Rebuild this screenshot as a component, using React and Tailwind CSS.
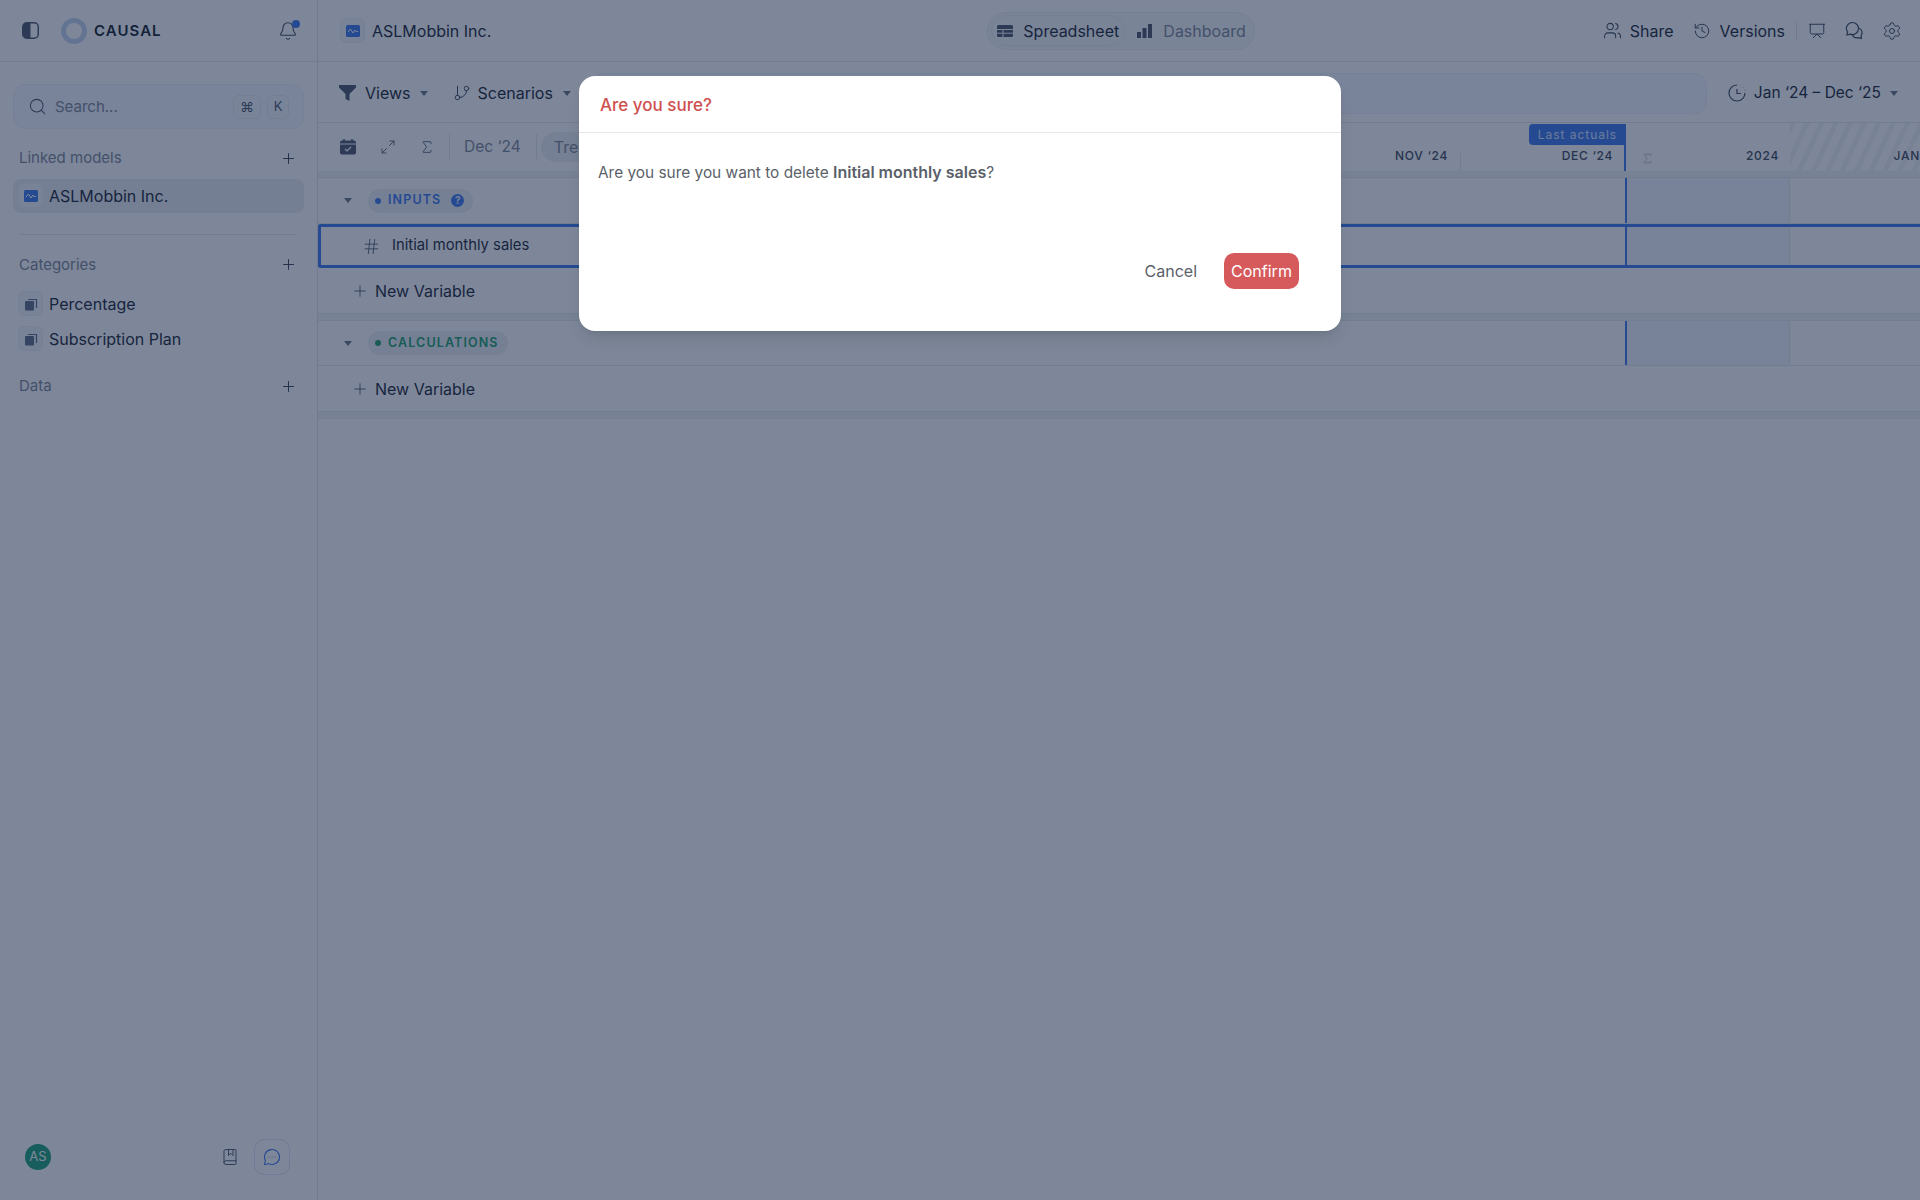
import React from 'react';
import {
  Bell, Search, Plus, GitBranch, Maximize2, Sigma, Hash, Users, History, Presentation, Settings, BookMarked, MessageCircleMore,
} from 'lucide-react';

const Caret = ({ className = '' }) => (
  <svg width="8" height="5" viewBox="0 0 8 5" className={`shrink-0 ${className}`}>
    <path d="M0 0h8L4 5z" fill="currentColor" />
  </svg>
);

// small blue square with the pulse line
const ModelIcon = () => (
  <div className="w-[25px] h-[25px] shrink-0 rounded-md bg-[#f3f5fb] border border-[#eef0f6] flex items-center justify-center">
    <svg width="14" height="12" viewBox="0 0 14 12">
      <rect width="14" height="12" rx="1.5" fill="#3f78f0" />
      <path d="M2 7l2.5-3L7 8l2-3 1 1.5h2" stroke="#fff" strokeWidth="1" fill="none" />
    </svg>
  </div>
);

const CopyIcon = () => (
  <div className="w-[25px] h-[25px] shrink-0 rounded-md bg-[#f3f5fb] border border-[#eef0f6] flex items-center justify-center">
    <svg width="14" height="14" viewBox="0 0 14 14" fill="none">
      <path d="M4 2.5h8.5V11" stroke="#5f6b86" strokeWidth="1.2" />
      <rect x="1" y="4" width="9" height="9.5" rx="1" fill="#5f6b86" />
    </svg>
  </div>
);

const SideLabel = ({ children }) => (
  <div className="flex items-center justify-between pl-[19px] pr-[20px] text-[15px] text-[#7f8696]">
    <span>{children}</span>
    <Plus size={17} strokeWidth={1.4} className="text-[#3b4252]" />
  </div>
);

const Sidebar = () => (
  <aside className="w-[318px] shrink-0 h-full border-r border-[#e3e5ea] flex flex-col">
    <div className="h-[62px] shrink-0 border-b border-[#e6e8ec] flex items-center pl-[22px] pr-[19px]">
      <svg width="17" height="17" viewBox="0 0 17 17">
        <rect x="0.75" y="0.75" width="15.5" height="15.5" rx="4" fill="none" stroke="#4d566b" strokeWidth="1.5" />
        <path d="M4.5 1H8.5V16H4.5A3.5 3.5 0 0 1 1 12.5V4.5A3.5 3.5 0 0 1 4.5 1Z" fill="#4d566b" />
      </svg>
      <div className="ml-[22px] w-[26px] h-[26px] rounded-full border-[5px] border-[#c5d6f2]" />
      <span className="ml-[7px] mt-[2px] text-[15px] font-semibold tracking-[0.07em] text-[#141c2c]">CAUSAL</span>
      <div className="relative ml-auto">
        <Bell size={20} strokeWidth={1.3} className="text-[#3f475a]" />
        <div className="absolute -top-[1px] -right-[2px] w-[8px] h-[8px] rounded-full bg-[#3f78f0]" />
      </div>
    </div>

    <div className="mx-[13px] mt-[22px] h-[45px] rounded-xl border border-[#eef1f8] bg-[#f5f6ff] flex items-center pl-[14px] pr-[14px]">
      <Search size={19} strokeWidth={1.3} className="text-[#4d566b]" />
      <span className="ml-[8px] mt-[1px] text-[15px] text-[#7f8696]">Search...</span>
      <div className="ml-auto flex gap-[6px]">
        <span className="w-[28px] h-[24px] rounded-md border border-[#e8eaf4] bg-[#f8f9ff] flex items-center justify-center text-[14px] text-[#4d566b]">⌘</span>
        <span className="w-[22px] h-[24px] rounded-md border border-[#e8eaf4] bg-[#f8f9ff] flex items-center justify-center text-[13px] text-[#4d566b]">K</span>
      </div>
    </div>

    <div className="mt-[18px]"><SideLabel>Linked models</SideLabel></div>
    <div className="mx-[13px] mt-[9px] h-[34px] rounded-lg bg-[#eceef2] flex items-center pl-[5px] gap-[6px] text-[16px] text-[#1d2536]">
      <ModelIcon />
      <span>ASLMobbin Inc.</span>
    </div>
    <div className="mx-[20px] mt-[21px] h-px bg-[#e6e8ec]" />
    <div className="mt-[19px]"><SideLabel>Categories</SideLabel></div>
    <div className="mt-[15px] flex flex-col gap-[10px] pl-[18px]">
      {['Percentage', 'Subscription Plan'].map((c) => (
        <div key={c} className="flex items-center gap-[6px] text-[16px] text-[#1d2536]">
          <CopyIcon />
          <span>{c}</span>
        </div>
      ))}
    </div>
    <div className="mt-[24px]"><SideLabel>Data</SideLabel></div>

    <div className="mt-auto mb-[25px] flex items-center pl-[25px] pr-[27px]">
      <div className="w-[26px] h-[26px] rounded-full bg-[#1fa37a] text-white text-[13px] flex items-center justify-center">AS</div>
      <BookMarked size={18} strokeWidth={1.3} className="ml-auto text-[#4d566b]" />
      <div className="ml-[15px] w-[36px] h-[36px] rounded-[10px] border border-[#dfe5f5] flex items-center justify-center">
        <MessageCircleMore size={18} strokeWidth={1.5} className="text-[#3f78f0]" />
      </div>
    </div>
  </aside>
);

const TopBar = () => (
  <div className="h-[62px] shrink-0 border-b border-[#e6e8ec] flex items-center pl-[22px] pr-[18px]">
    <ModelIcon />
    <span className="ml-[7px] mt-[1px] text-[16px] text-[#1d2536]">ASLMobbin Inc.</span>
    <div className="ml-[496px] h-[38px] w-[268px] rounded-full border border-[#eceef2] bg-[#f8f9fb] flex items-center p-[3px] text-[16px]">
      <div className="h-[31px] w-[134px] pl-[5px] rounded-full border border-[#eceef2] flex items-center gap-[10px] text-[#1d2536]">
        <svg width="16" height="12" viewBox="0 0 16 12">
          <rect width="16" height="12" rx="1.5" fill="#4d566b" />
          <path d="M0 4.5h16M0 8.2h16M6 4.5V12" stroke="#f8f9fb" strokeWidth="1" />
        </svg>
        <span>Spreadsheet</span>
      </div>
      <div className="flex items-center gap-[10px] ml-[12px] text-[#7f8696]">
        <svg width="16" height="14" viewBox="0 0 16 14" fill="#4d566b">
          <rect x="0" y="8" width="4" height="6" />
          <rect x="5.5" y="4" width="4" height="10" />
          <rect x="11" y="0" width="4" height="14" />
        </svg>
        <span>Dashboard</span>
      </div>
    </div>
    <div className="ml-auto flex items-center text-[16px] text-[#1d2536]">
      <Users size={19} strokeWidth={1.3} className="text-[#3f475a]" />
      <span className="ml-[8px]">Share</span>
      <History size={18} strokeWidth={1.3} className="ml-[19px] text-[#3f475a]" />
      <span className="ml-[9px]">Versions</span>
      <div className="ml-[11px] h-[20px] w-px bg-[#e0e2e8]" />
      <Presentation size={18} strokeWidth={1.3} className="ml-[11px] text-[#3f475a]" />
      <svg width="19" height="19" viewBox="0 0 19 19" fill="none" stroke="#3f475a" strokeWidth="1.2" className="ml-[19px]">
        <path d="M7.5 1.5a6 6 0 0 0-5 9.4L2 14l3.2-.9a6 6 0 0 0 8.3-5.6 6 6 0 0 0-6-6z" />
        <path d="M13.4 7a5 5 0 0 1 3.6 4.8c0 1-.3 1.9-.7 2.6v3l-3-.7a5 5 0 0 1-5.9-2.6" />
      </svg>
      <Settings size={20} strokeWidth={1.2} className="ml-[18px] text-[#3f475a]" />
    </div>
  </div>
);

const ToolBar = () => (
  <div className="h-[61px] shrink-0 border-b border-[#e6e8ec] flex items-center pt-[2px] pl-[21px] pr-[22px] text-[16px] text-[#1d2536]">
    <svg width="17" height="16" viewBox="0 0 17 16" fill="#4d566b">
      <path d="M0 0h17v2.5L10.5 9v7l-4-2V9L0 2.5z" />
    </svg>
    <span className="ml-[9px]">Views</span>
    <Caret className="ml-[9px] text-[#6b7386]" />
    <GitBranch size={18} strokeWidth={1.3} className="ml-[25px] text-[#3f475a]" />
    <span className="ml-[7px]">Scenarios</span>
    <Caret className="ml-[10px] text-[#6b7386]" />
    <div className="flex-1 ml-[20px] h-[41px] rounded-xl border border-[#eef1f8] bg-[#f5f6ff]" />
    <svg width="18" height="18" viewBox="0 0 18 18" fill="none" stroke="#3f475a" strokeWidth="1.2" className="ml-[21px]">
      <path d="M9 1a8 8 0 1 0 8 8M9 5v4.5h4" />
      <path d="M12 1.6l.2.1M15 3.5l.2.2M16.6 6.2v.2" />
    </svg>
    <span className="ml-[8px] text-[15.5px]">Jan ‘24 – Dec ‘25</span>
    <Caret className="ml-[9px] text-[#6b7386]" />
  </div>
);

// right side of every grid row: empty months, then the totals column and what follows it
const RowCols = () => (
  <div className="flex-1 flex h-full">
    <div className="flex-1" />
    <div className="w-[165px] h-full border-r border-[#e6e8ec] bg-[#f3f4ff] border-l-2 border-l-[#3f78f0]" />
    <div className="w-[130px]" />
  </div>
);

const monthLabel = 'text-[12px] font-medium tracking-[0.06em] text-[#3f475a]';

const HeaderRow = () => (
  <div className="h-[48px] shrink-0 flex items-stretch text-[#7f8696]">
    <div className="w-[232px] shrink-0 flex items-center pl-[22px] whitespace-nowrap">
      <svg width="16" height="16" viewBox="0 0 16 16" className="shrink-0">
        <rect y="1.5" width="16" height="14" rx="2" fill="#4d566b" />
        <path d="M4 0v3M12 0v3" stroke="#4d566b" strokeWidth="1.5" />
        <path d="M0 5h16" stroke="#fff" strokeWidth="1" />
        <path d="M5 10l2 2 4-4" stroke="#fff" strokeWidth="1.2" fill="none" />
      </svg>
      <Maximize2 size={16} strokeWidth={1.3} className="shrink-0 ml-[24px] text-[#4d566b]" />
      <Sigma size={16} strokeWidth={1.3} className="shrink-0 ml-[23px] text-[#4d566b]" />
      <div className="shrink-0 ml-[14px] h-[26px] w-px bg-[#e6e8ec]" />
      <span className="shrink-0 ml-[14px] text-[15.5px]">Dec ‘24</span>
      <div className="shrink-0 ml-[15px] h-[26px] w-px bg-[#e6e8ec]" />
      <div className="shrink-0 ml-[4px] h-[30px] pl-[13px] w-[70px] rounded-full bg-[#eef0f4] flex items-center text-[16px]">Trend</div>
    </div>
    <div className="flex-1 flex justify-end">
      <div className={`flex-1 flex justify-end items-end pb-[6px] pr-[12px] ${monthLabel}`}>NOV ‘24</div>
      <div className={`w-[166px] relative flex justify-end items-end pb-[6px] pr-[11px] border-r-2 border-r-[#3f78f0] mt-[1px] ${monthLabel}`}>
        <div className="absolute left-0 bottom-0 w-px h-[18px] bg-[#e6e8ec]" />
        DEC ‘24
        <div className="absolute top-0 -right-[2px] w-[97px] h-[21px] rounded-l-[4px] bg-[#3f78f0] text-[#d7e4ff] text-[12px] tracking-[0.08em] font-normal flex items-center justify-center">Last actuals</div>
      </div>
      <div className={`w-[164px] flex items-end justify-between pb-[6px] pl-[15px] pr-[11px] ${monthLabel}`}>
        <Sigma size={13} strokeWidth={1.2} className="text-[#9aa0ae]" />
        <span>2024</span>
      </div>
      <div className={`w-[130px] flex items-end justify-end pb-[6px] overflow-hidden bg-[repeating-linear-gradient(115deg,#f2f3f6_0px,#f2f3f6_5px,#ffffff_5px,#ffffff_13px)] ${monthLabel}`}>
        <span>JAN</span>
      </div>
    </div>
  </div>
);

const GroupRow = ({ color, text, label, help, height }) => (
  <div className={`${height} flex items-center border-b border-[#e6e8ec]`}>
    <div className="w-[232px] shrink-0 flex items-center pl-[26px]">
      <Caret className="text-[#6b7386]" />
      <div className="ml-[16px] h-[24px] pl-[7px] pr-[9px] rounded-full bg-[#eef0f5] flex items-center shrink-0">
        <div className={`w-[6px] h-[6px] rounded-full ${color}`} />
        <span className={`ml-[7px] text-[12.5px] font-semibold tracking-[0.09em] ${text}`}>{label}</span>
        {help && <span className="ml-[10px] w-[13px] h-[13px] rounded-full bg-[#3f78f0] text-[#e8efff] text-[10px] font-bold flex items-center justify-center">?</span>}
      </div>
    </div>
    <RowCols />
  </div>
);

const NewVariable = () => (
  <div className="h-[46px] flex items-center pl-[33px] text-[16px] text-[#1d2536] border-b border-[#e6e8ec]">
    <Plus size={18} strokeWidth={1.1} className="text-[#3f475a]" />
    <span className="ml-[6px]">New Variable</span>
  </div>
);

const Band = () => <div className="h-[7px] bg-[#f2f3f6] border-b border-[#e6e8ec]" />;

const Grid = () => (
  <div className="flex flex-col">
    <HeaderRow />
    <Band />
    <GroupRow color="bg-[#3f78f0]" text="text-[#3f78f0]" label="INPUTS" help height="h-[46px]" />
    <div className="h-[44px] flex items-center rounded-l-[3px] border-y-[3px] border-l-[3px] border-[#3f78f0]">
      <div className="w-[232px] shrink-0 flex items-center pl-[41px] text-[14.8px] text-[#1d2536]">
        <Hash size={19} strokeWidth={1.1} className="text-[#4d566b]" />
        <span className="ml-[11px] -mt-[1px] whitespace-nowrap">Initial monthly sales</span>
      </div>
      <RowCols />
    </div>
    <NewVariable />
    <Band />
    <GroupRow color="bg-[#22a06b]" text="text-[#22a06b]" label="CALCULATIONS" height="h-[45px]" />
    <NewVariable />
    <Band />
  </div>
);

const ConfirmModal = () => (
  <div className="absolute left-[579px] top-[76px] w-[762px] h-[255px] rounded-2xl bg-white shadow-lg flex flex-col">
    <div className="h-[57px] shrink-0 border-b border-[#e5e7eb] flex items-center pl-[21px] pt-[4px] text-[17px] font-medium text-[#d0504f]">
      Are you sure?
    </div>
    <p className="mt-[29px] pl-[19px] text-[15.4px] leading-[20px] text-[#5a5f69]">
      Are you sure you want to delete <span className="text-[16px] font-semibold">Initial monthly sales</span>?
    </p>
    <div className="mt-auto mb-[42px] pr-[42px] flex items-center justify-end gap-[27px] text-[16px]">
      <span className="text-[#5a5f69]">Cancel</span>
      <span className="w-[75px] h-[36px] rounded-[10px] bg-[#d65a5b] text-white flex items-center justify-center">Confirm</span>
    </div>
  </div>
);

export default function App() {
  return (
    <div className="relative w-[1920px] h-[1200px] overflow-hidden bg-white [font-family:Inter,sans-serif]">
      <div className="flex h-full">
        <Sidebar />
        <main className="flex-1 min-w-0 flex flex-col">
          <TopBar />
          <ToolBar />
          <Grid />
        </main>
      </div>
      <div className="absolute inset-0 bg-[#132546]/55" />
      <ConfirmModal />
    </div>
  );
}
